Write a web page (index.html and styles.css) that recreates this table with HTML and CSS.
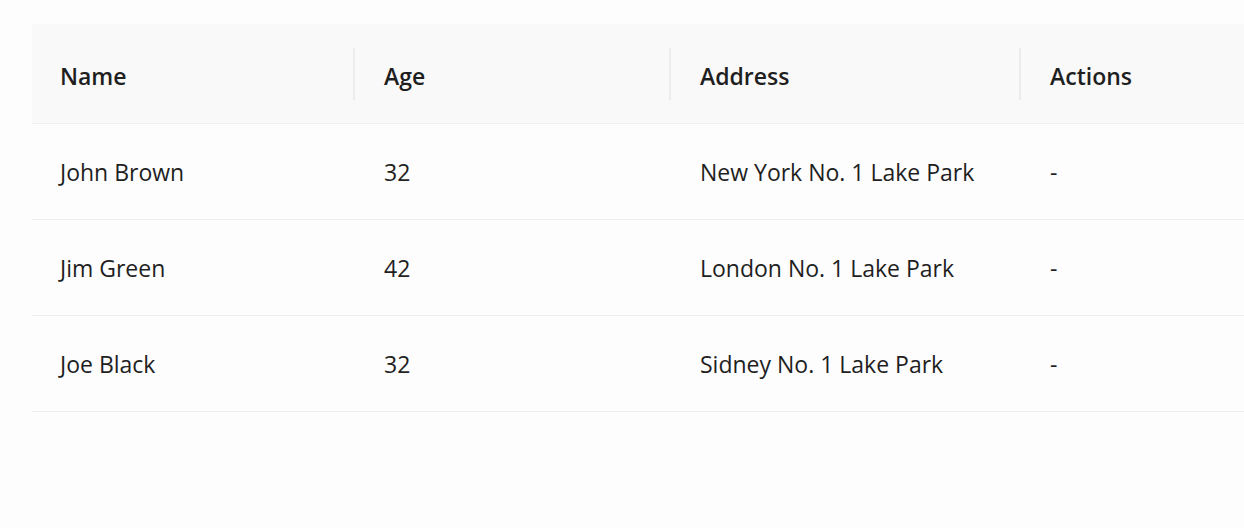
FILE: index.html
```html
<!DOCTYPE html>
<html>
<head>
<meta charset="utf-8">
<link rel="stylesheet" href="styles.css">
</head>
<body>
<div class="wrap">
  <table class="tbl">
    <colgroup>
      <col class="c-name">
      <col class="c-age">
      <col class="c-addr">
      <col class="c-act">
    </colgroup>
    <thead>
      <tr>
        <th>Name</th>
        <th>Age</th>
        <th>Address</th>
        <th>Actions</th>
      </tr>
    </thead>
    <tbody>
      <tr><td>John Brown</td><td>32</td><td>New York No. 1 Lake Park</td><td>-</td></tr>
      <tr><td>Jim Green</td><td>42</td><td>London No. 1 Lake Park</td><td>-</td></tr>
      <tr><td>Joe Black</td><td>32</td><td>Sidney No. 1 Lake Park</td><td>-</td></tr>
    </tbody>
  </table>
</div>
</body>
</html>
```
FILE: styles.css
```css
html, body {
  margin: 0;
  padding: 0;
  background: #fdfdfd;
  overflow: hidden;
}
.wrap {
  padding: 24px 0 0 32px;
}
.tbl {
  border-collapse: separate;
  border-spacing: 0;
  table-layout: fixed;
  width: 100%;
  font-family: "Open Sans", "Noto Sans", sans-serif;
  font-size: 23px;
  color: #1f1f1f;
}
.c-name { width: 324px; }
.c-age { width: 316px; }
.c-addr { width: 350px; }
.c-act { width: auto; }
.tbl th, .tbl td {
  padding: 0 28px;
  height: 95px;
  text-align: left;
  border-bottom: 1px solid #efefef;
  line-height: 38px;
  white-space: nowrap;
}
.tbl th {
  position: relative;
  padding-top: 4px;
  background: #f9f9f9;
  font-weight: 600;
}
.tbl th:not(:last-child)::before {
  content: "";
  position: absolute;
  right: 1px;
  top: 50%;
  width: 2px;
  height: 52px;
  transform: translateY(-50%);
  background: #ececec;
}
.tbl td {
  font-weight: 400;
}
```
